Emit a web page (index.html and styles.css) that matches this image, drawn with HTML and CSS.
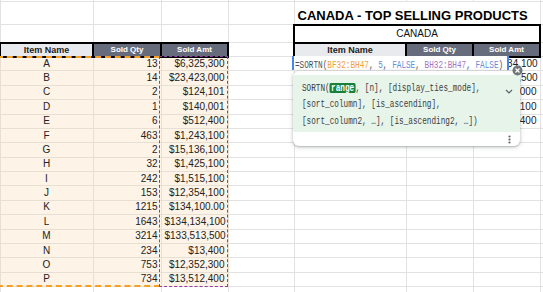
FILE: index.html
```html
<!DOCTYPE html>
<html lang="en">
<head>
  <meta charset="UTF-8">
  <title>Canada - Top Selling Products</title>
  <link rel="stylesheet" href="styles.css">
</head>
<body>
  <table class="sheet">
    <colgroup>
      <col class="col-a"><col class="col-b"><col class="col-c"><col class="col-d">
      <col class="col-e"><col class="col-f"><col class="col-g"><col class="col-h">
    </colgroup>
    <tr class="r-top"><td></td><td></td><td></td><td></td><td></td><td></td><td></td><td></td></tr>
    <tr class="r-title">
      <td></td><td></td><td></td><td></td>
      <td class="title" colspan="3">CANADA - TOP SELLING PRODUCTS</td>
      <td></td>
    </tr>
    <tr class="r-band">
      <td></td><td></td><td></td><td></td>
      <td class="band" colspan="3">CANADA</td>
      <td></td>
    </tr>
    <tr class="r-head">
      <td class="hd hd-light">Item Name</td>
      <td class="hd hd-dark">Sold Qty</td>
      <td class="hd hd-dark">Sold Amt</td>
      <td></td>
      <td class="hd hd-light">Item Name</td>
      <td class="hd hd-dark">Sold Qty</td>
      <td class="hd hd-dark">Sold Amt</td>
      <td></td>
    </tr>
    <tr class="r-data"><td class="peach item">A</td><td class="peach num">13</td><td class="peach num">$6,325,300</td><td></td><td></td><td></td><td class="num">$134,134,100</td><td></td></tr>
    <tr class="r-data"><td class="peach item">B</td><td class="peach num">14</td><td class="peach num">$23,423,000</td><td></td><td></td><td></td><td class="num">$133,513,500</td><td></td></tr>
    <tr class="r-data"><td class="peach item">C</td><td class="peach num">2</td><td class="peach num">$124,101</td><td></td><td></td><td></td><td class="num">$23,423,000</td><td></td></tr>
    <tr class="r-data"><td class="peach item">D</td><td class="peach num">1</td><td class="peach num">$140,001</td><td></td><td></td><td></td><td class="num">$15,136,100</td><td></td></tr>
    <tr class="r-data"><td class="peach item">E</td><td class="peach num">6</td><td class="peach num">$512,400</td><td></td><td></td><td></td><td class="num">$13,512,400</td><td></td></tr>
    <tr class="r-data"><td class="peach item">F</td><td class="peach num">463</td><td class="peach num">$1,243,100</td><td></td><td></td><td></td><td></td><td></td></tr>
    <tr class="r-data"><td class="peach item">G</td><td class="peach num">2</td><td class="peach num">$15,136,100</td><td></td><td></td><td></td><td></td><td></td></tr>
    <tr class="r-data"><td class="peach item">H</td><td class="peach num">32</td><td class="peach num">$1,425,100</td><td></td><td></td><td></td><td></td><td></td></tr>
    <tr class="r-data"><td class="peach item">I</td><td class="peach num">242</td><td class="peach num">$1,515,100</td><td></td><td></td><td></td><td></td><td></td></tr>
    <tr class="r-data"><td class="peach item">J</td><td class="peach num">153</td><td class="peach num">$12,354,100</td><td></td><td></td><td></td><td></td><td></td></tr>
    <tr class="r-data"><td class="peach item">K</td><td class="peach num">1215</td><td class="peach num">$134,100.00</td><td></td><td></td><td></td><td></td><td></td></tr>
    <tr class="r-data"><td class="peach item">L</td><td class="peach num">1643</td><td class="peach num">$134,134,100</td><td></td><td></td><td></td><td></td><td></td></tr>
    <tr class="r-data"><td class="peach item">M</td><td class="peach num">3214</td><td class="peach num">$133,513,500</td><td></td><td></td><td></td><td></td><td></td></tr>
    <tr class="r-data"><td class="peach item">N</td><td class="peach num">234</td><td class="peach num">$13,400</td><td></td><td></td><td></td><td></td><td></td></tr>
    <tr class="r-data"><td class="peach item">O</td><td class="peach num">753</td><td class="peach num">$12,352,300</td><td></td><td></td><td></td><td></td><td></td></tr>
    <tr class="r-data"><td class="peach item">P</td><td class="peach num">734</td><td class="peach num">$13,512,400</td><td></td><td></td><td></td><td></td><td></td></tr>
    <tr class="r-end"><td></td><td></td><td></td><td></td><td></td><td></td><td></td><td></td></tr>
  </table>

  <!-- formula range highlights -->
  <div class="range range-orange"></div>
  <div class="range range-purple"></div>

  <!-- in-cell formula editor -->
  <div class="editor">
    <span class="mono">=SORTN(<span class="f-orange">BF32:BH47</span>, <span class="f-blue">5</span>, <span class="f-blue">FALSE</span>, <span class="f-purple">BH32:BH47</span>, <span class="f-blue">FALSE</span>)</span>
  </div>

  <div class="hint">
    <div class="hint-body">
      <div class="hint-text">
        <div class="mono hint-line">SORTN(<span class="arg-active">range</span>, [n], [display_ties_mode],</div>
        <div class="mono hint-line">[sort_column], [is_ascending],</div>
        <div class="mono hint-line">[sort_column2, …], [is_ascending2, …])</div>
      </div>
      <svg class="chevron" width="8" height="5" viewBox="0 0 8 5">
        <polyline points="1,1 4,4 7,1" fill="none" stroke="#5f6368" stroke-width="1.2"/>
      </svg>
    </div>
    <div class="hint-foot">
      <svg width="3" height="9" viewBox="0 0 3 9">
        <circle cx="1.5" cy="1.5" r="1.1" fill="#5f6368"/>
        <circle cx="1.5" cy="4.5" r="1.1" fill="#5f6368"/>
        <circle cx="1.5" cy="7.5" r="1.1" fill="#5f6368"/>
      </svg>
    </div>
  </div>

  <svg class="close-btn" width="11" height="11" viewBox="0 0 11 11">
    <circle cx="5.5" cy="5.5" r="5" fill="#70757a"/>
    <path d="M3.5 3.5 L7.5 7.5 M7.5 3.5 L3.5 7.5" stroke="#fff" stroke-width="1.3"/>
  </svg>
</body>
</html>
```

FILE: styles.css
```css
:root {
  --grid: #e2e2e2;
  --peach: #fdf3e6;
  --peach-grid: #e8dfd3;
  --head-light: #e8eaed;
  --head-dark: #676c7d;
  --sheets-blue: #4a86e8;
}

* {
  box-sizing: border-box;
}

body {
  margin: 0;
  width: 543px;
  height: 292px;
  position: relative;
  overflow: hidden;
  background: #fff;
  font-family: 'Liberation Sans', Arial, sans-serif;
  color: #222;
}

.sheet {
  border-collapse: collapse;
  table-layout: fixed;
  width: 544px;
  margin: -14px 0 0 -1px;
  font-size: 10px;
}

.col-a { width: 93px; }
.col-b { width: 68px; }
.col-c { width: 67px; }
.col-d { width: 66px; }
.col-e { width: 112px; }
.col-f { width: 67px; }
.col-g { width: 67px; }
.col-h { width: 4px; }

.sheet td {
  border: 1px solid var(--grid);
  padding: 0 3px;
  line-height: 10px;
  white-space: nowrap;
  overflow: hidden;
}

.r-top { height: 15px; }
.r-title { height: 23px; }
.r-band { height: 18px; }
.r-head { height: 14px; }
.r-data { height: 14.375px; }
.r-end { height: 6px; }

.sheet td.title {
  vertical-align: bottom;
  padding-bottom: 1px;
  font-size: 13px;
  font-weight: bold;
  line-height: normal;
  color: #000;
}

.sheet td.band {
  border: 2px solid #000;
  text-align: center;
  color: #111;
}

.sheet td.hd {
  border: 2px solid #000;
  text-align: center;
  font-weight: bold;
}

.hd-light {
  background: var(--head-light);
  font-size: 9px;
  color: #222;
}

.hd-dark {
  background: var(--head-dark);
  font-size: 8px;
  color: #fff;
}

.sheet td.peach {
  background: var(--peach);
  border-color: var(--peach-grid);
}

.item { text-align: center; }
.num { text-align: right; }

/* dashed range outlines */
.range {
  position: absolute;
  pointer-events: none;
}

.range-orange {
  left: -3px;
  top: 56px;
  width: 163px;
  height: 231px;
  border: 2px dashed #f4a024;
  border-right: none;
}

.range-purple {
  left: 159px;
  top: 56px;
  width: 69px;
  height: 231px;
  border: 1px dashed #8e3fa8;
}

.mono {
  font-family: 'Liberation Mono', 'Courier New', monospace;
  font-size: 11.5px;
  white-space: pre;
  display: inline-block;
  transform: scaleX(0.67);
  transform-origin: 0 0;
}

.editor {
  position: absolute;
  left: 292px;
  top: 56px;
  width: 217px;
  height: 14px;
  padding-left: 1px;
  background: #fff;
  border-left: 2px solid var(--sheets-blue);
  border-right: 2px solid var(--sheets-blue);
  line-height: 14px;
  color: #4d5156;
}

.f-orange { color: #f2a03a; }
.f-blue { color: #6690d9; }
.f-purple { color: #a676c0; }

.close-btn {
  position: absolute;
  left: 512px;
  top: 65px;
}

.hint {
  position: absolute;
  left: 293px;
  top: 71px;
  width: 227px;
  height: 75px;
  padding-top: 4px;
  background: #fff;
  border-radius: 6px;
  overflow: hidden;
  box-shadow: 0 1px 2px rgba(60, 64, 67, 0.3), 0 1px 4px 1px rgba(60, 64, 67, 0.15);
}

.hint-body {
  display: flex;
  height: 57px;
  padding: 5px 7px 0 9px;
  background: #e6f4ea;
}

.hint-text {
  flex: 1;
  min-width: 0;
  color: #3c4043;
}

.hint-line {
  display: block;
  line-height: 16.4px;
}

.arg-active {
  display: inline-block;
  line-height: 10px;
  padding: 0 2px;
  border-radius: 2px;
  background: #188038;
  color: #fff;
  font-weight: bold;
}

.chevron {
  margin-top: 9px;
}

.hint-foot {
  height: 14px;
  display: flex;
  justify-content: flex-end;
  align-items: center;
  padding-right: 9px;
}
```
